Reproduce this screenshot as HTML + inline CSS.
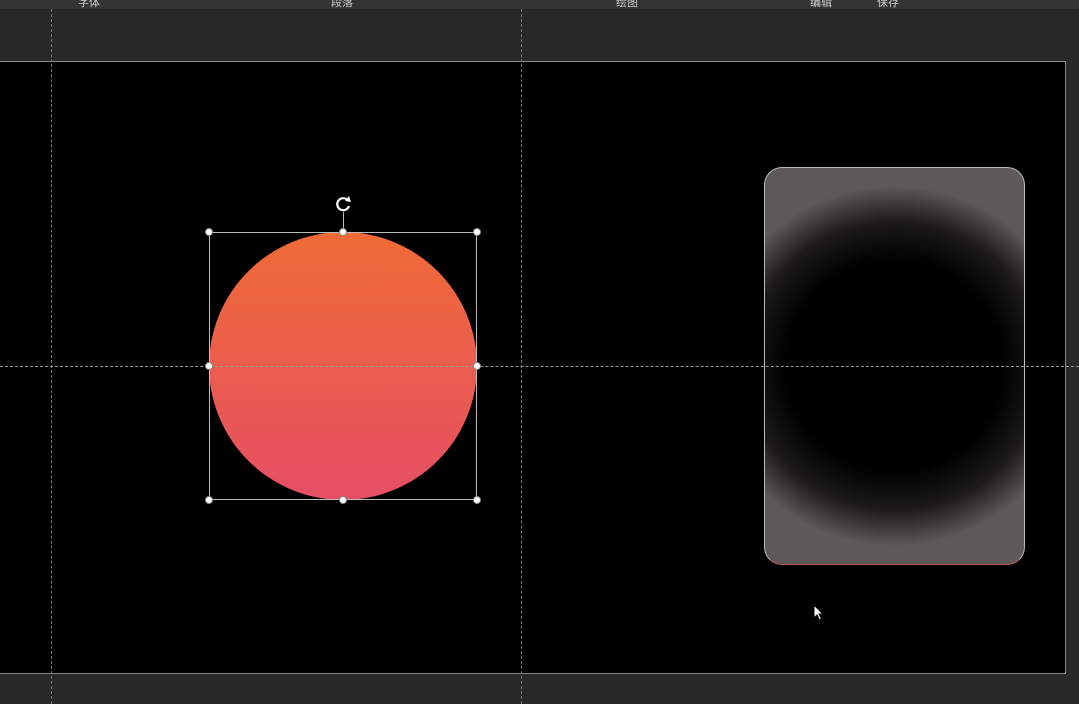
<!DOCTYPE html>
<html><head><meta charset="utf-8"><style>
html,body{margin:0;padding:0;background:#282828;width:1079px;height:704px;overflow:hidden;position:relative;font-family:"Liberation Sans","Noto Sans CJK SC",sans-serif}
.top{position:absolute;left:0;top:0;width:1079px;height:9px;background:#333;overflow:hidden}
.top span{position:absolute;top:-6px;font-size:11px;color:#ccc}
.canvas{position:absolute;left:0;top:61px;width:1065px;height:611px;background:#000;border:1px solid #888;border-left:none}
.vl{position:absolute;top:9px;height:695px;width:0;border-left:1px dashed #777}
.hl{position:absolute;left:0;top:366px;width:1079px;border-top:1px dashed #999}
.circle{position:absolute;left:209px;top:232px;width:268px;height:268px;border-radius:50%;background:linear-gradient(#f06b36,#e54f64)}
.sel{position:absolute;left:209px;top:232px;width:268px;height:268px;border:1px solid #bbb;box-sizing:border-box}
.h{position:absolute;width:8px;height:8px;border-radius:50%;background:#fff;border:1px solid #888;box-sizing:border-box;margin:-4px 0 0 -4px}
.card{position:absolute;left:764px;top:167px;width:261px;height:398px;border-radius:18px;box-sizing:border-box;border:1.5px solid #bbb;border-bottom-color:#c0555c;
background:radial-gradient(ellipse 185px 180px at 50% 50%,#000 0%,#000 58%,#1c1a1a 80%,#5e5859 100%),#5e5859}
</style></head><body>
<div class="top"><span style="left:78px">字体</span><span style="left:331px">段落</span><span style="left:616px">绘图</span><span style="left:810px">编辑</span><span style="left:877px">保存</span></div>
<div class="canvas"></div>
<div class="vl" style="left:51px"></div>
<div class="vl" style="left:521px"></div>
<div class="circle"></div>
<div class="card"></div>
<div class="hl"></div>
<div class="sel"></div>
<div style="position:absolute;left:343px;top:212px;width:1px;height:20px;background:#bbb"></div>
<svg style="position:absolute;left:334px;top:194px" width="20" height="20" viewBox="0 0 20 20"><path d="M14 6.5A6 6 0 1 0 15 12" fill="none" stroke="#fff" stroke-width="2.2"/><path d="M11 7L17 8L15 2Z" fill="#fff"/></svg>
<div class="h" style="left:209px;top:232px"></div><div class="h" style="left:343px;top:232px"></div><div class="h" style="left:477px;top:232px"></div>
<div class="h" style="left:209px;top:366px"></div><div class="h" style="left:477px;top:366px"></div>
<div class="h" style="left:209px;top:500px"></div><div class="h" style="left:343px;top:500px"></div><div class="h" style="left:477px;top:500px"></div>
<svg style="position:absolute;left:813px;top:604px" width="12" height="18" viewBox="0 0 12 18"><path d="M1 1L1 14L4 11L6.5 16L8.5 15L6 10L10 10Z" fill="#fff" stroke="#000" stroke-width="1"/></svg>
</body></html>
